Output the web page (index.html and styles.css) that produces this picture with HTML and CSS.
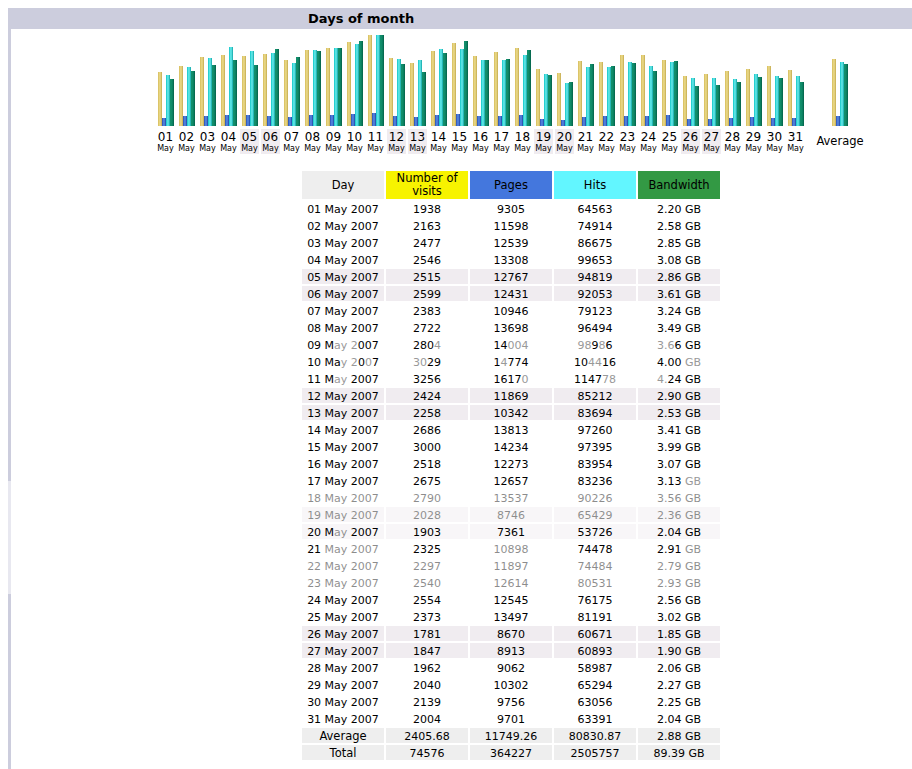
FILE: index.html
```html
<!DOCTYPE html>
<html lang="en">
<head>
<meta charset="utf-8">
<title>Days of month</title>
<link rel="stylesheet" href="styles.css">
</head>
<body>
<header class="title"><b>Days of month</b></header>
<main class="content">
<section class="chart">
<div class="col"><div class="bars"><i class="v" style="height:54px"></i><i class="p" style="height:8px"></i><i class="h" style="height:51px"></i><i class="k" style="height:47px"></i></div><div class="lab">01<small>May</small></div></div>
<div class="col"><div class="bars"><i class="v" style="height:60px"></i><i class="p" style="height:10px"></i><i class="h" style="height:59px"></i><i class="k" style="height:55px"></i></div><div class="lab">02<small>May</small></div></div>
<div class="col"><div class="bars"><i class="v" style="height:69px"></i><i class="p" style="height:10px"></i><i class="h" style="height:68px"></i><i class="k" style="height:61px"></i></div><div class="lab">03<small>May</small></div></div>
<div class="col"><div class="bars"><i class="v" style="height:71px"></i><i class="p" style="height:11px"></i><i class="h" style="height:79px"></i><i class="k" style="height:66px"></i></div><div class="lab">04<small>May</small></div></div>
<div class="col"><div class="bars"><i class="v" style="height:70px"></i><i class="p" style="height:11px"></i><i class="h" style="height:75px"></i><i class="k" style="height:61px"></i></div><div class="lab we">05<small>May</small></div></div>
<div class="col"><div class="bars"><i class="v" style="height:72px"></i><i class="p" style="height:10px"></i><i class="h" style="height:73px"></i><i class="k" style="height:77px"></i></div><div class="lab we">06<small>May</small></div></div>
<div class="col"><div class="bars"><i class="v" style="height:66px"></i><i class="p" style="height:9px"></i><i class="h" style="height:63px"></i><i class="k" style="height:69px"></i></div><div class="lab">07<small>May</small></div></div>
<div class="col"><div class="bars"><i class="v" style="height:76px"></i><i class="p" style="height:11px"></i><i class="h" style="height:76px"></i><i class="k" style="height:75px"></i></div><div class="lab">08<small>May</small></div></div>
<div class="col"><div class="bars"><i class="v" style="height:78px"></i><i class="p" style="height:11px"></i><i class="h" style="height:78px"></i><i class="k" style="height:78px"></i></div><div class="lab">09<small>May</small></div></div>
<div class="col"><div class="bars"><i class="v" style="height:84px"></i><i class="p" style="height:12px"></i><i class="h" style="height:82px"></i><i class="k" style="height:85px"></i></div><div class="lab">10<small>May</small></div></div>
<div class="col"><div class="bars"><i class="v" style="height:91px"></i><i class="p" style="height:13px"></i><i class="h" style="height:91px"></i><i class="k" style="height:91px"></i></div><div class="lab">11<small>May</small></div></div>
<div class="col"><div class="bars"><i class="v" style="height:68px"></i><i class="p" style="height:10px"></i><i class="h" style="height:67px"></i><i class="k" style="height:62px"></i></div><div class="lab we">12<small>May</small></div></div>
<div class="col"><div class="bars"><i class="v" style="height:63px"></i><i class="p" style="height:9px"></i><i class="h" style="height:66px"></i><i class="k" style="height:54px"></i></div><div class="lab we">13<small>May</small></div></div>
<div class="col"><div class="bars"><i class="v" style="height:75px"></i><i class="p" style="height:11px"></i><i class="h" style="height:77px"></i><i class="k" style="height:73px"></i></div><div class="lab">14<small>May</small></div></div>
<div class="col"><div class="bars"><i class="v" style="height:83px"></i><i class="p" style="height:12px"></i><i class="h" style="height:77px"></i><i class="k" style="height:85px"></i></div><div class="lab">15<small>May</small></div></div>
<div class="col"><div class="bars"><i class="v" style="height:70px"></i><i class="p" style="height:10px"></i><i class="h" style="height:66px"></i><i class="k" style="height:66px"></i></div><div class="lab">16<small>May</small></div></div>
<div class="col"><div class="bars"><i class="v" style="height:74px"></i><i class="p" style="height:10px"></i><i class="h" style="height:66px"></i><i class="k" style="height:67px"></i></div><div class="lab">17<small>May</small></div></div>
<div class="col"><div class="bars"><i class="v" style="height:78px"></i><i class="p" style="height:11px"></i><i class="h" style="height:71px"></i><i class="k" style="height:76px"></i></div><div class="lab">18<small>May</small></div></div>
<div class="col"><div class="bars"><i class="v" style="height:57px"></i><i class="p" style="height:7px"></i><i class="h" style="height:52px"></i><i class="k" style="height:51px"></i></div><div class="lab we">19<small>May</small></div></div>
<div class="col"><div class="bars"><i class="v" style="height:53px"></i><i class="p" style="height:6px"></i><i class="h" style="height:43px"></i><i class="k" style="height:44px"></i></div><div class="lab we">20<small>May</small></div></div>
<div class="col"><div class="bars"><i class="v" style="height:65px"></i><i class="p" style="height:9px"></i><i class="h" style="height:59px"></i><i class="k" style="height:62px"></i></div><div class="lab">21<small>May</small></div></div>
<div class="col"><div class="bars"><i class="v" style="height:64px"></i><i class="p" style="height:10px"></i><i class="h" style="height:59px"></i><i class="k" style="height:60px"></i></div><div class="lab">22<small>May</small></div></div>
<div class="col"><div class="bars"><i class="v" style="height:71px"></i><i class="p" style="height:10px"></i><i class="h" style="height:64px"></i><i class="k" style="height:63px"></i></div><div class="lab">23<small>May</small></div></div>
<div class="col"><div class="bars"><i class="v" style="height:71px"></i><i class="p" style="height:10px"></i><i class="h" style="height:60px"></i><i class="k" style="height:55px"></i></div><div class="lab">24<small>May</small></div></div>
<div class="col"><div class="bars"><i class="v" style="height:66px"></i><i class="p" style="height:11px"></i><i class="h" style="height:64px"></i><i class="k" style="height:65px"></i></div><div class="lab">25<small>May</small></div></div>
<div class="col"><div class="bars"><i class="v" style="height:50px"></i><i class="p" style="height:7px"></i><i class="h" style="height:48px"></i><i class="k" style="height:40px"></i></div><div class="lab we">26<small>May</small></div></div>
<div class="col"><div class="bars"><i class="v" style="height:52px"></i><i class="p" style="height:7px"></i><i class="h" style="height:48px"></i><i class="k" style="height:41px"></i></div><div class="lab we">27<small>May</small></div></div>
<div class="col"><div class="bars"><i class="v" style="height:55px"></i><i class="p" style="height:8px"></i><i class="h" style="height:47px"></i><i class="k" style="height:44px"></i></div><div class="lab">28<small>May</small></div></div>
<div class="col"><div class="bars"><i class="v" style="height:57px"></i><i class="p" style="height:9px"></i><i class="h" style="height:52px"></i><i class="k" style="height:49px"></i></div><div class="lab">29<small>May</small></div></div>
<div class="col"><div class="bars"><i class="v" style="height:60px"></i><i class="p" style="height:8px"></i><i class="h" style="height:50px"></i><i class="k" style="height:48px"></i></div><div class="lab">30<small>May</small></div></div>
<div class="col"><div class="bars"><i class="v" style="height:56px"></i><i class="p" style="height:8px"></i><i class="h" style="height:50px"></i><i class="k" style="height:44px"></i></div><div class="lab">31<small>May</small></div></div>
<div class="col avg"><div class="bars"><i class="v" style="height:67px"></i><i class="p" style="height:10px"></i><i class="h" style="height:64px"></i><i class="k" style="height:62px"></i></div><div class="lab">Average</div></div>
</section>
<table class="stats">
<thead>
<tr><th class="th-day">Day</th><th class="th-vis">Number of visits</th><th class="th-pag">Pages</th><th class="th-hit">Hits</th><th class="th-bw">Bandwidth</th></tr>
</thead>
<tbody>
<tr><td>01 May 2007</td><td>1938</td><td>9305</td><td>64563</td><td>2.20 GB</td></tr>
<tr><td>02 May 2007</td><td>2163</td><td>11598</td><td>74914</td><td>2.58 GB</td></tr>
<tr><td>03 May 2007</td><td>2477</td><td>12539</td><td>86675</td><td>2.85 GB</td></tr>
<tr><td>04 May 2007</td><td>2546</td><td>13308</td><td>99653</td><td>3.08 GB</td></tr>
<tr class="we"><td>05 May 2007</td><td>2515</td><td>12767</td><td>94819</td><td>2.86 GB</td></tr>
<tr class="we"><td>06 May 2007</td><td>2599</td><td>12431</td><td>92053</td><td>3.61 GB</td></tr>
<tr><td>07 May 2007</td><td>2383</td><td>10946</td><td>79123</td><td>3.24 GB</td></tr>
<tr><td>08 May 2007</td><td>2722</td><td>13698</td><td>96494</td><td>3.49 GB</td></tr>
<tr><td>09 M<span class="ft">ay 2</span>007</td><td>280<span class="ft">4</span></td><td>14<span class="ft">004</span></td><td><span class="ft">98</span>9<span class="ft">8</span>6</td><td><span class="ft">3.6</span>6 GB</td></tr>
<tr><td>10 Ma<span class="ft">y 2</span>0<span class="ft">0</span>7</td><td><span class="ft">30</span>29</td><td>1<span class="ft">4</span>774</td><td>10<span class="ft">44</span>16</td><td>4.00 <span class="ft">GB</span></td></tr>
<tr><td>11 M<span class="ft">ay</span> 2007</td><td>3256</td><td>1617<span class="ft">0</span></td><td>1147<span class="ft">78</span></td><td><span class="ft">4.</span>24 GB</td></tr>
<tr class="we"><td>12 May 2007</td><td>2424</td><td>11869</td><td>85212</td><td>2.90 GB</td></tr>
<tr class="we"><td>13 May 2007</td><td>2258</td><td>10342</td><td>83694</td><td>2.53 GB</td></tr>
<tr><td>14 May 2007</td><td>2686</td><td>13813</td><td>97260</td><td>3.41 GB</td></tr>
<tr><td>15 May 2007</td><td>3000</td><td>14234</td><td>97395</td><td>3.99 GB</td></tr>
<tr><td>16 May 2007</td><td>2518</td><td>12273</td><td>83954</td><td>3.07 GB</td></tr>
<tr><td><span class="up">17 May 2007</span></td><td><span class="up">2675</span></td><td><span class="up">12657</span></td><td><span class="up">83236</span></td><td><span class="up">3.13</span> <span class="up ft">GB</span></td></tr>
<tr><td>18 May 2007</td><td>2790</td><td>13537</td><td>90226</td><td>3.56 GB</td></tr>
<tr class="we"><td>19 May 2007</td><td>2028</td><td>8746</td><td>65429</td><td>2.36 GB</td></tr>
<tr class="we"><td><span class="up">20 M</span>ay <span class="up">2007</span></td><td><span class="up">1903</span></td><td><span class="up">7361</span></td><td><span class="up">53726</span></td><td><span class="up">2.04 GB</span></td></tr>
<tr><td><span class="up">21</span> May 2007</td><td><span class="up">2325</span></td><td>10898</td><td><span class="up">74478</span></td><td><span class="up">2.91</span> GB</td></tr>
<tr><td>22 May 2007</td><td>2297</td><td>11897</td><td>74484</td><td>2.79 GB</td></tr>
<tr><td>23 May 2007</td><td>2540</td><td>12614</td><td>80531</td><td>2.93 GB</td></tr>
<tr><td>24 May 2007</td><td>2554</td><td>12545</td><td>76175</td><td>2.56 GB</td></tr>
<tr><td>25 May 2007</td><td>2373</td><td>13497</td><td>81191</td><td>3.02 GB</td></tr>
<tr class="we"><td>26 May 2007</td><td>1781</td><td>8670</td><td>60671</td><td>1.85 GB</td></tr>
<tr class="we"><td>27 May 2007</td><td>1847</td><td>8913</td><td>60893</td><td>1.90 GB</td></tr>
<tr><td>28 May 2007</td><td>1962</td><td>9062</td><td>58987</td><td>2.06 GB</td></tr>
<tr><td>29 May 2007</td><td>2040</td><td>10302</td><td>65294</td><td>2.27 GB</td></tr>
<tr><td>30 May 2007</td><td>2139</td><td>9756</td><td>63056</td><td>2.25 GB</td></tr>
<tr><td>31 May 2007</td><td>2004</td><td>9701</td><td>63391</td><td>2.04 GB</td></tr>
</tbody>
<tfoot>
<tr><td>Average</td><td>2405.68</td><td>11749.26</td><td>80830.87</td><td>2.88 GB</td></tr>
<tr><td>Total</td><td>74576</td><td>364227</td><td>2505757</td><td>89.39 GB</td></tr>
</tfoot>
</table>
</main>
<div class="wash"></div>
</body>
</html>
```
FILE: styles.css
```css
html, body {
  background: #fff;
}
body {
  margin: 8px 0 0 8px;
  font-family: "DejaVu Sans", Verdana, sans-serif;
  font-size: 11px;
  color: #000;
}
.title {
  height: 21px;
  line-height: 21px;
  background: #cccddd;
  padding-left: 300px;
  font-size: 13px;
}
.content {
  border-left: 3px solid #cccddd;
  min-height: calc(100vh - 29px);
  box-sizing: border-box;
  padding-top: 6px;
}
.chart {
  display: flex;
  gap: 2px;
  padding-left: 145px;
}
.col {
  width: 19px;
  display: flex;
  flex-direction: column;
  align-items: center;
}
.col.avg {
  width: 60px;
  margin-left: 3px;
}
.bars {
  height: 91px;
  display: flex;
  align-items: flex-end;
}
.bars i {
  display: block;
  width: 4px;
}
.bars .v { background: linear-gradient(90deg, #d6bc5c, #ecdc8c 50%, #c4aa4e); }
.bars .p { background: linear-gradient(90deg, #2a4fb0, #5a8ce8 50%, #2044a0); }
.bars .h { background: linear-gradient(90deg, #10c4c6, #6ceeee 50%, #0ea4a6); }
.bars .k { background: linear-gradient(90deg, #14906c, #0e8a68 50%, #046048); }
.lab {
  width: 19px;
  height: 25px;
  margin-top: 3px;
  text-align: center;
  line-height: 16px;
  font-size: 12px;
  white-space: nowrap;
}
.lab small {
  display: block;
  font-size: 8px;
  line-height: 8px;
}
.lab.we {
  background: #f0ecf0;
}
.avg .lab {
  width: 60px;
  line-height: 25px;
  font-size: 11.5px;
}
.stats {
  table-layout: fixed;
  width: 422px;
  margin: 15px 0 0 289px;
  border-collapse: separate;
  border-spacing: 2px;
}
.stats th, .stats td {
  padding: 0;
  text-align: center;
  font-weight: normal;
  white-space: nowrap;
}
.stats th {
  height: 28px;
  line-height: 13px;
  font-size: 11.5px;
  white-space: normal;
}
.stats td {
  height: 13px;
  padding-top: 2px;
  line-height: 13px;
}
.th-day { background: #eeeeee; }
.th-vis { background: #f7f300; }
.th-pag { background: #4477dd; }
.th-hit { background: #62f6ff; }
.th-bw { background: #339944; }
tr.we td { background: #f0ecf0; }
tfoot td { background: #eeeeee; }
tfoot td:first-child { font-size: 11.5px; }
.ft { color: #999; }
.up {
  position: relative;
  z-index: 2;
}
.wash {
  position: absolute;
  left: 8px;
  right: 0;
  top: 481px;
  height: 113px;
  background: rgba(255, 255, 255, 0.55);
  z-index: 1;
}
```
